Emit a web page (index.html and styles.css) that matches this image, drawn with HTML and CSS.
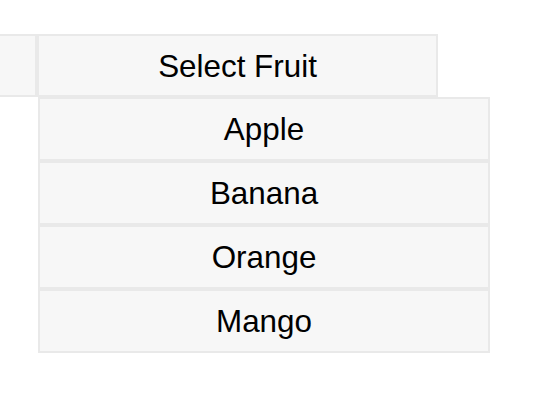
FILE: index.html
```html
<!DOCTYPE html>
<html>
<head>
<meta charset="utf-8">
<link rel="stylesheet" href="styles.css">
</head>
<body>
<div class="page">
  <div class="bar">
    <div class="side"></div>
    <div class="select">Select Fruit</div>
  </div>
  <ul class="menu">
    <li class="item">Apple</li>
    <li class="item">Banana</li>
    <li class="item">Orange</li>
    <li class="item">Mango</li>
  </ul>
</div>
</body>
</html>
```
FILE: styles.css
```css
html, body {
  margin: 0;
  padding: 0;
  background: #ffffff;
}
.page {
  padding-top: 34px;
  font-family: "Liberation Sans", Arial, Helvetica, sans-serif;
  font-size: 31.4px;
  color: #000;
}
.bar {
  display: flex;
  height: 63px;
}
.side {
  width: 41px;
  margin-left: -4px;
  box-sizing: border-box;
  border: 2px solid #e9e9e9;
  background: #f7f7f7;
  flex: none;
}
.select {
  width: 401px;
  box-sizing: border-box;
  border: 2px solid #e9e9e9;
  background: #f7f7f7;
  display: flex;
  align-items: center;
  justify-content: center;
  padding-top: 3px;
  flex: none;
}
.menu {
  list-style: none;
  margin: 0 0 0 38px;
  padding: 0;
  width: 452px;
}
.item {
  height: 64px;
  box-sizing: border-box;
  border: 2px solid #e9e9e9;
  background: #f7f7f7;
  display: flex;
  align-items: center;
  justify-content: center;
  padding-top: 2px;
}
```
